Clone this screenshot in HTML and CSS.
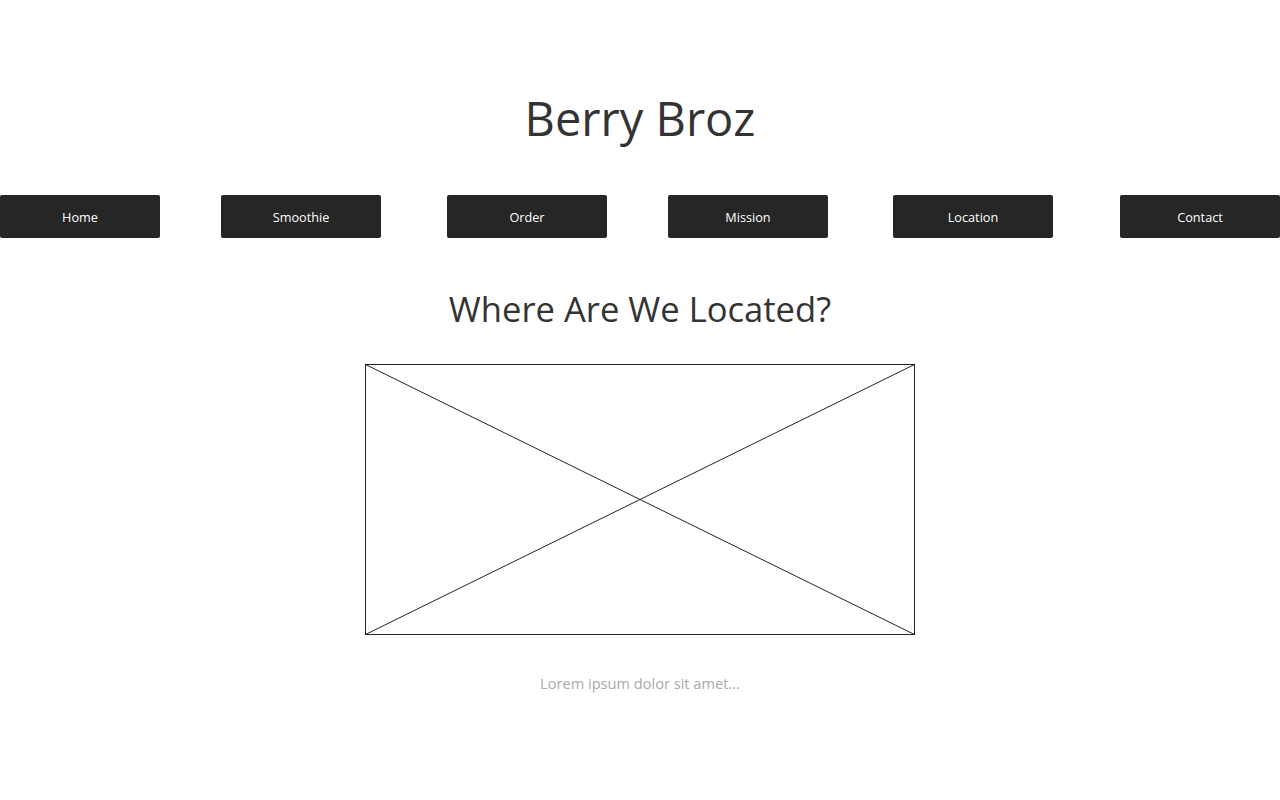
FILE: index.html
```html
<!DOCTYPE html>
<html>
<head>
<meta charset="utf-8">
<link rel="stylesheet" href="styles.css">
</head>
<body>
<header class="header">
  <h1 class="title">Berry Broz</h1>
</header>
<nav class="nav">
  <a class="nav-btn">Home</a>
  <a class="nav-btn">Smoothie</a>
  <a class="nav-btn">Order</a>
  <a class="nav-btn">Mission</a>
  <a class="nav-btn">Location</a>
  <a class="nav-btn">Contact</a>
</nav>
<main class="main">
  <h2 class="heading">Where Are We Located?</h2>
  <div class="map">
    <svg class="map-svg" width="550" height="272" viewBox="0 0 550 272">
      <rect x="0.5" y="0.5" width="549" height="270" fill="none" stroke="#222" stroke-width="1"/>
      <line x1="0.5" y1="0.5" x2="549.5" y2="270.5" stroke="#222" stroke-width="1"/>
      <line x1="549.5" y1="0.5" x2="0.5" y2="270.5" stroke="#222" stroke-width="1"/>
    </svg>
  </div>
  <p class="text">Lorem ipsum dolor sit amet...</p>
</main>
</body>
</html>
```

FILE: styles.css
```css
html, body {
  margin: 0;
  padding: 0;
  background: #fff;
  font-family: "Open Sans", "Noto Sans", sans-serif;
  color: #333;
}

.header {
  display: flex;
  justify-content: center;
  padding-top: 85px;
  box-sizing: border-box;
  height: 195px;
}

.title {
  margin: 0;
  font-size: 47px;
  font-weight: 400;
  line-height: 66px;
  color: #333;
}

.nav {
  display: flex;
  height: 43px;
}

.nav-btn {
  width: 160px;
  height: 43px;
  background: #262626;
  border-radius: 2px;
  color: #fff;
  font-size: 12.7px;
  display: flex;
  align-items: center;
  justify-content: center;
  padding-top: 1px;
  box-sizing: border-box;
}

.nav-btn:nth-child(2) { margin-left: 61px; }
.nav-btn:nth-child(3) { margin-left: 66px; }
.nav-btn:nth-child(4) { margin-left: 61px; }
.nav-btn:nth-child(5) { margin-left: 65px; }
.nav-btn:nth-child(6) { margin-left: 67px; }

.main {
  display: flex;
  flex-direction: column;
  align-items: center;
  padding-top: 46px;
}

.heading {
  margin: 0;
  font-size: 34.6px;
  font-weight: 400;
  line-height: 50px;
  color: #333;
}

.map {
  margin-top: 30px;
  width: 550px;
  height: 272px;
}

.map-svg {
  display: block;
}

.text {
  margin: 35px 0 0;
  font-size: 14.6px;
  line-height: 24px;
  color: #aaa;
}
```
